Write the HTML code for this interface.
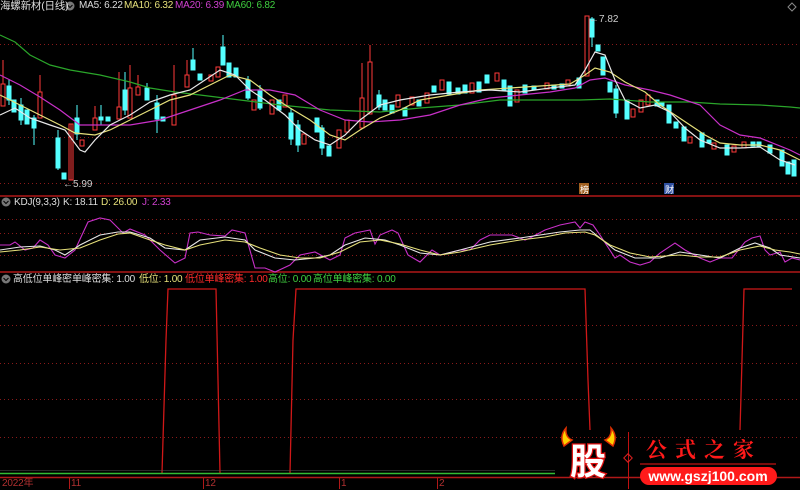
<!DOCTYPE html>
<html><head><meta charset="utf-8"><style>
body{margin:0;background:#000;width:800px;height:489px;overflow:hidden;font-family:"Liberation Sans","Noto Sans CJK SC",sans-serif}
svg{position:absolute;left:0;top:0}
.t{position:absolute;font-size:10px;white-space:nowrap;line-height:12px;letter-spacing:-0.2px}
</style></head><body>
<svg width="800" height="489" xmlns="http://www.w3.org/2000/svg">
<g stroke="#8a1a1a" stroke-dasharray="1,3" stroke-width="1">
<line x1="0" y1="44.5" x2="800" y2="44.5"/><line x1="0" y1="137.5" x2="800" y2="137.5"/><line x1="0" y1="183.5" x2="800" y2="183.5"/>
<line x1="0" y1="219.5" x2="800" y2="219.5"/><line x1="0" y1="233.5" x2="800" y2="233.5"/><line x1="0" y1="255.5" x2="800" y2="255.5"/>
<line x1="0" y1="325.5" x2="800" y2="325.5"/><line x1="0" y1="363.5" x2="800" y2="363.5"/><line x1="0" y1="399.5" x2="800" y2="399.5"/><line x1="0" y1="437.5" x2="800" y2="437.5"/>
</g>
<g stroke="#b01818" stroke-width="1.5">
<line x1="0" y1="196" x2="800" y2="196"/><line x1="0" y1="272" x2="800" y2="272"/><line x1="0" y1="477.5" x2="800" y2="477.5"/>
</g>
<g stroke="#b01818" stroke-width="1">
<line x1="69.5" y1="477" x2="69.5" y2="489"/><line x1="203.5" y1="477" x2="203.5" y2="489"/><line x1="339.5" y1="477" x2="339.5" y2="489"/><line x1="437.5" y1="477" x2="437.5" y2="489"/>
</g>
<g stroke-width="1">
<g stroke="#ff3a3a" fill="#000">
<rect x="1" y="84" width="4" height="22"/><line x1="3" y1="60" x2="3" y2="84"/>
<rect x="38" y="92" width="4" height="26"/><line x1="40" y1="75" x2="40" y2="92"/>
<rect x="69" y="124" width="4" height="56"/><line x1="71" y1="124" x2="71" y2="180"/>
<rect x="80" y="140" width="4" height="6"/>
<rect x="93" y="118" width="4" height="12"/><line x1="95" y1="106" x2="95" y2="118"/>
<rect x="117" y="107" width="4" height="12"/><line x1="119" y1="72" x2="119" y2="107"/>
<rect x="128" y="88" width="4" height="30"/><line x1="130" y1="65" x2="130" y2="88"/>
<rect x="136" y="87" width="4" height="8"/><line x1="138" y1="75" x2="138" y2="87"/>
<rect x="172" y="95" width="4" height="30"/><line x1="174" y1="65" x2="174" y2="95"/>
<rect x="185" y="75" width="4" height="12"/><line x1="187" y1="60" x2="187" y2="75"/>
<rect x="209" y="75" width="4" height="6"/>
<rect x="216" y="67" width="4" height="10"/>
<rect x="252" y="100" width="4" height="10"/>
<rect x="270" y="100" width="4" height="14"/>
<rect x="283" y="95" width="4" height="12"/>
<rect x="302" y="134" width="4" height="10"/>
<rect x="337" y="130" width="4" height="18"/>
<rect x="345" y="120" width="4" height="12"/>
<rect x="360" y="98" width="4" height="30"/><line x1="362" y1="63" x2="362" y2="98"/>
<rect x="368" y="62" width="4" height="52"/><line x1="370" y1="45" x2="370" y2="62"/>
<rect x="396" y="95" width="4" height="12"/>
<rect x="410" y="97" width="4" height="8"/>
<rect x="425" y="93" width="4" height="10"/>
<rect x="440" y="80" width="4" height="10"/>
<rect x="470" y="83" width="4" height="10"/>
<rect x="495" y="73" width="4" height="8"/>
<rect x="515" y="90" width="4" height="12"/>
<rect x="545" y="83" width="4" height="6"/>
<rect x="566" y="80" width="4" height="6"/>
<rect x="585" y="16" width="4" height="60"/>
<rect x="631" y="109" width="4" height="8"/>
<rect x="639" y="100" width="4" height="12"/>
<rect x="646" y="95" width="4" height="10"/>
<rect x="688" y="137" width="4" height="6"/>
<rect x="712" y="143" width="4" height="6"/>
<rect x="732" y="146" width="4" height="6"/>
<rect x="742" y="142" width="4" height="6"/>
</g>
<g fill="#54ffff" stroke="#54ffff">
<rect x="7" y="86" width="4" height="14"/><line x1="9" y1="80" x2="9" y2="105"/>
<rect x="12" y="100" width="4" height="12"/>
<rect x="19" y="105" width="4" height="15"/><line x1="21" y1="98" x2="21" y2="125"/>
<rect x="25" y="110" width="4" height="14"/>
<rect x="32" y="118" width="4" height="10"/><line x1="34" y1="115" x2="34" y2="145"/>
<rect x="56" y="138" width="4" height="30"/><line x1="58" y1="130" x2="58" y2="170"/>
<rect x="62" y="173" width="4" height="6"/>
<rect x="75" y="118" width="4" height="16"/><line x1="77" y1="105" x2="77" y2="140"/>
<rect x="99" y="117" width="4" height="3"/><line x1="101" y1="105" x2="101" y2="125"/>
<rect x="106" y="117" width="4" height="4"/>
<rect x="123" y="90" width="4" height="20"/><line x1="125" y1="72" x2="125" y2="115"/>
<rect x="145" y="88" width="4" height="12"/><line x1="147" y1="83" x2="147" y2="100"/>
<rect x="155" y="103" width="4" height="16"/><line x1="157" y1="95" x2="157" y2="133"/>
<rect x="161" y="117" width="4" height="4"/>
<rect x="191" y="60" width="4" height="10"/><line x1="193" y1="48" x2="193" y2="70"/>
<rect x="198" y="74" width="4" height="6"/>
<rect x="221" y="47" width="4" height="18"/><line x1="223" y1="35" x2="223" y2="65"/>
<rect x="227" y="63" width="4" height="14"/>
<rect x="234" y="68" width="4" height="9"/>
<rect x="246" y="80" width="4" height="18"/><line x1="248" y1="76" x2="248" y2="100"/>
<rect x="258" y="90" width="4" height="18"/><line x1="260" y1="85" x2="260" y2="110"/>
<rect x="277" y="100" width="4" height="10"/>
<rect x="289" y="113" width="4" height="26"/><line x1="291" y1="108" x2="291" y2="145"/>
<rect x="296" y="125" width="4" height="20"/><line x1="298" y1="120" x2="298" y2="152"/>
<rect x="315" y="118" width="4" height="14"/>
<rect x="320" y="128" width="4" height="20"/><line x1="322" y1="125" x2="322" y2="155"/>
<rect x="327" y="146" width="4" height="10"/>
<rect x="377" y="95" width="4" height="12"/><line x1="379" y1="90" x2="379" y2="110"/>
<rect x="383" y="100" width="4" height="10"/>
<rect x="390" y="105" width="4" height="8"/>
<rect x="403" y="108" width="4" height="8"/>
<rect x="417" y="100" width="4" height="6"/>
<rect x="432" y="86" width="4" height="6"/>
<rect x="447" y="82" width="4" height="12"/>
<rect x="456" y="88" width="4" height="6"/>
<rect x="463" y="85" width="4" height="8"/>
<rect x="477" y="82" width="4" height="10"/>
<rect x="485" y="75" width="4" height="8"/>
<rect x="502" y="80" width="4" height="10"/>
<rect x="508" y="86" width="4" height="20"/>
<rect x="523" y="85" width="4" height="8"/>
<rect x="532" y="86" width="4" height="4"/>
<rect x="552" y="85" width="4" height="4"/>
<rect x="560" y="84" width="4" height="4"/>
<rect x="577" y="78" width="4" height="10"/>
<rect x="590" y="19" width="4" height="18"/><line x1="592" y1="17" x2="592" y2="47"/>
<rect x="596" y="45" width="4" height="6"/>
<rect x="601" y="57" width="4" height="18"/>
<rect x="608" y="82" width="4" height="10"/>
<rect x="614" y="89" width="4" height="24"/><line x1="616" y1="85" x2="616" y2="118"/>
<rect x="625" y="100" width="4" height="19"/>
<rect x="655" y="100" width="4" height="6"/>
<rect x="660" y="102" width="4" height="4"/>
<rect x="667" y="105" width="4" height="18"/>
<rect x="674" y="122" width="4" height="6"/>
<rect x="682" y="127" width="4" height="14"/>
<rect x="700" y="133" width="4" height="14"/>
<rect x="707" y="140" width="4" height="3"/>
<rect x="725" y="145" width="4" height="10"/>
<rect x="751" y="142" width="4" height="4"/>
<rect x="757" y="142" width="4" height="4"/>
<rect x="768" y="145" width="4" height="8"/>
<rect x="780" y="150" width="4" height="16"/>
<rect x="786" y="162" width="4" height="12"/>
<rect x="792" y="160" width="4" height="16"/>
</g>
</g>
<g fill="none" stroke-width="1.2">
<polyline stroke="#2aa52a" points="0,35 15,42 30,55 50,65 70,70 100,75 130,82 150,88 175,92 200,95 240,100 280,105 330,110 380,112 420,108 460,105 500,100 540,100 580,100 610,99 650,102 690,102 720,104 760,105 790,107 800,108"/>
<polyline stroke="#c830c8" points="0,75 20,85 40,97 60,110 80,125 100,125 130,125 160,120 190,110 220,100 245,90 270,90 295,95 320,110 345,120 370,122 400,120 430,115 460,105 490,98 520,95 550,92 575,88 590,80 605,78 625,85 650,90 670,95 700,105 720,125 740,135 760,138 790,150 800,155"/>
<polyline stroke="#e6e07a" points="0,95 20,105 40,115 60,125 75,133 95,135 110,130 130,120 150,110 170,100 190,95 210,85 230,75 250,80 270,95 290,108 310,120 330,135 345,140 360,130 380,118 400,110 420,100 450,95 480,90 510,88 540,86 570,84 585,75 595,68 610,72 625,82 645,92 660,105 675,115 690,125 705,135 720,143 740,145 760,145 780,150 800,160"/>
<polyline stroke="#e8e8e8" points="0,115 15,108 30,118 50,125 65,130 80,150 85,152 95,140 110,125 130,115 150,102 170,95 190,90 205,80 220,70 235,75 250,90 265,100 285,115 300,130 315,140 330,145 345,135 360,120 380,105 400,100 430,95 460,92 490,90 520,92 550,88 575,85 585,70 595,52 605,55 615,80 625,100 640,108 655,105 670,112 685,128 700,140 720,148 740,148 760,147 780,160 795,165"/>
</g>
<text x="63" y="187" fill="#ccc" font-size="10" font-family="Liberation Sans">←5.99</text>
<text x="589" y="22" fill="#ccc" font-size="10" font-family="Liberation Sans">←7.82</text>
<rect x="579" y="183" width="10" height="11" fill="#a06020"/><text x="580" y="193" fill="#fff" font-size="9">榜</text>
<rect x="664" y="183" width="10" height="11" fill="#3050a0"/><text x="665" y="193" fill="#fff" font-size="9">财</text>
<g fill="none" stroke-width="1.1">
<polyline stroke="#c830c8" points="0,245 10,245 15,242 25,250 33,248 40,240 48,245 55,255 65,258 75,250 88,222 100,218 110,220 123,233 130,229 145,235 160,250 175,263 185,258 190,233 198,232 210,235 225,236 232,230 245,233 255,268 265,268 275,272 290,265 300,255 315,252 330,260 340,255 345,238 355,233 370,230 375,244 380,235 392,230 398,233 408,255 420,262 432,250 440,255 460,250 470,250 480,240 490,235 512,235 525,240 530,238 545,230 560,225 575,222 580,228 585,222 593,225 600,235 615,258 620,255 630,262 640,265 650,262 660,253 675,243 685,250 700,258 710,262 720,258 732,258 745,242 752,238 760,236 765,250 770,255 780,252 785,262 792,258 800,260"/>
<polyline stroke="#e8e8e8" points="0,250 20,247 40,246 55,250 65,255 80,245 100,235 118,232 130,232 150,238 165,248 185,250 200,240 225,237 245,240 255,250 275,258 295,260 315,258 330,255 345,245 365,238 385,240 400,245 420,253 440,255 460,250 490,242 520,238 540,235 560,232 580,230 590,230 600,238 615,250 635,258 660,258 680,252 700,255 720,258 740,248 755,243 770,248 780,255 800,258"/>
<polyline stroke="#e6e07a" points="0,252 20,250 40,247 60,250 80,248 100,240 118,234 130,233 150,240 165,245 185,250 200,245 225,240 245,242 260,248 280,255 300,258 320,258 340,252 360,242 380,240 400,244 420,250 440,255 460,252 490,245 520,240 545,237 565,233 585,232 595,235 610,245 630,253 650,257 680,255 700,257 720,257 740,250 760,246 775,250 790,252 800,254"/>
</g>
<polyline fill="none" stroke="#d01818" stroke-width="1.3" points="162,473 166,340 168,289 216,289 218,380 220,473"/>
<polyline fill="none" stroke="#d01818" stroke-width="1.3" points="290,473 293,340 296,289 585,289 588,380 590,430"/>
<polyline fill="none" stroke="#d01818" stroke-width="1.3" points="740,430 742,360 744,289 792,289"/>
<line x1="0" y1="473.5" x2="555" y2="473.5" stroke="#33bb33" stroke-width="1.5"/>
<line x1="0" y1="470.5" x2="555" y2="470.5" stroke="#555" stroke-width="0.6"/>
<g>
<path d="M564,446 q-5,-10 2,-18 q-1,9 6,12 z" fill="#ffd000" stroke="#e03000" stroke-width="1.5"/>
<path d="M613,446 q5,-10 -2,-18 q1,9 -6,12 z" fill="#ffd000" stroke="#e03000" stroke-width="1.5"/>
<text x="570" y="474" font-size="36" font-weight="bold" fill="#fff" stroke="#e01010" stroke-width="2.5" paint-order="stroke" font-family="Noto Sans CJK SC">股</text>
<line x1="628.5" y1="432" x2="628.5" y2="489" stroke="#c01010"/>
<rect x="625" y="455" width="6" height="6" transform="rotate(45 628 458)" fill="none" stroke="#e02020"/>
<text x="646" y="457" font-size="21" font-weight="bold" fill="#ff1a1a" letter-spacing="8" font-family="Noto Serif CJK SC">公式之家</text>
<line x1="640" y1="464" x2="776" y2="464" stroke="#a01010" stroke-width="1.5"/>
<rect x="640" y="467" width="137" height="18" rx="9" fill="#ff1a1a"/>
<text x="708" y="481" font-size="14" font-weight="bold" fill="#fff" text-anchor="middle" font-family="Liberation Sans">www.gszj100.com</text>
</g>
<circle cx="6" cy="202" r="4.5" fill="#777"/><path d="M3.5,201 L6,203.5 L8.5,201" stroke="#000" fill="none"/>
<circle cx="6" cy="279" r="4.5" fill="#777"/><path d="M3.5,278 L6,280.5 L8.5,278" stroke="#000" fill="none"/>
<circle cx="70" cy="6" r="4.5" fill="#777"/><path d="M67.5,5 L70,7.5 L72.5,5" stroke="#000" fill="none"/>
<path d="M792,3 L796,7 L792,11 L788,7 Z" stroke="#888" fill="none"/>
</svg>
<div class="t" style="left:0;top:0;color:#ddd;font-size:10.5px">海螺新材(日线)</div>
<div class="t" style="left:79px;top:0;color:#ddd">MA5: 6.22</div>
<div class="t" style="left:124px;top:0;color:#e6e07a">MA10: 6.32</div>
<div class="t" style="left:175px;top:0;color:#d040d0">MA20: 6.39</div>
<div class="t" style="left:226px;top:0;color:#3fcf3f">MA60: 6.82</div>
<div class="t" style="left:14px;top:197px;color:#ddd">KDJ(9,3,3)</div>
<div class="t" style="left:63px;top:197px;color:#ddd">K: 18.11</div>
<div class="t" style="left:101px;top:197px;color:#e6e07a">D: 26.00</div>
<div class="t" style="left:142px;top:197px;color:#d040d0">J: 2.33</div>
<div class="t" style="left:13px;top:274px;color:#ddd">高低位单峰密</div>
<div class="t" style="left:72px;top:274px;color:#ddd">单峰密集: 1.00</div>
<div class="t" style="left:139px;top:274px;color:#e6e07a">低位: 1.00</div>
<div class="t" style="left:185px;top:274px;color:#ff2a2a">低位单峰密集: 1.00</div>
<div class="t" style="left:268px;top:274px;color:#3fcf3f">高位: 0.00</div>
<div class="t" style="left:313px;top:274px;color:#3fcf3f">高位单峰密集: 0.00</div>
<div class="t" style="left:2px;top:478px;color:#b03030">2022年</div>
<div class="t" style="left:71px;top:478px;color:#b03030">11</div>
<div class="t" style="left:205px;top:478px;color:#b03030">12</div>
<div class="t" style="left:341px;top:478px;color:#b03030">1</div>
<div class="t" style="left:439px;top:478px;color:#b03030">2</div>
</body></html>
